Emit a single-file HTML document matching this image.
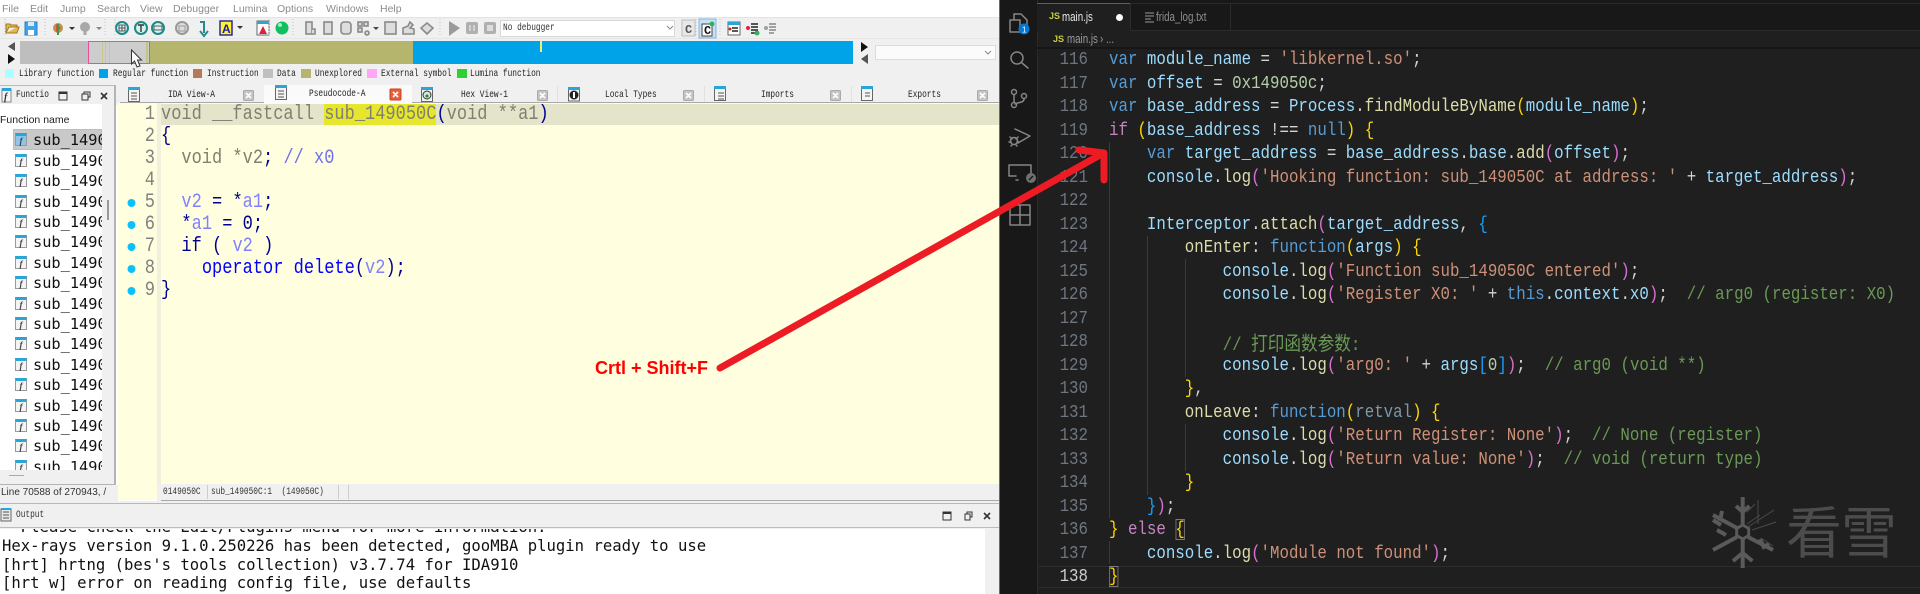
<!DOCTYPE html>
<html><head><meta charset="utf-8"><style>
html,body{margin:0;padding:0;width:1920px;height:594px;overflow:hidden;background:#fff}
body{position:relative}
div{position:absolute;box-sizing:border-box;white-space:pre}
i{font-style:normal}
.m{font:10.5px "Liberation Sans",sans-serif;color:#8c8c8c;top:3px;line-height:13px}
.s{font:10.5px/12px "Liberation Mono",monospace;color:#222;transform:scaleX(.746);transform-origin:0 0}
.fi{left:15px;width:12px;height:13px;border:1px solid #999;border-top:3px solid #2aa6d6;background:#f4f4f4;font:italic bold 9px/10px "Liberation Serif",serif;color:#444;text-align:center}
.fn{left:33px;font:15.3px/20px "DejaVu Sans Mono",monospace;color:#111}
#ida{left:161px;top:104px;width:1000px;height:198px;overflow:visible;white-space:normal;font:20px/22px "Liberation Mono",monospace;transform:scaleX(.85);transform-origin:0 0;color:#808070}
#ida div{position:static;height:22px;white-space:pre}
.gn{left:130px;width:25px;text-align:right;font:20px/22px "Liberation Mono",monospace;color:#808080;transform:scaleX(.85);transform-origin:100% 0}
.o{color:#000090}.h{color:#0000ff}.vv{color:#8080ff}.cm{color:#7070ee}
.out{left:2px;font:15.6px/19px "DejaVu Sans Mono",monospace;color:#111}
#code{left:1109.4px;top:48.25px;width:1100px;height:541px;white-space:normal;font:18.5px "Liberation Mono",monospace;line-height:23.51px;color:#d4d4d4;transform:scaleX(.853);transform-origin:0 0}
#code div{position:static;height:23.51px;white-space:pre}
.k{color:#569cd6}.v{color:#9cdcfe}.t{color:#ce9178}.n{color:#b5cea8}.f{color:#dcdcaa}.c{color:#6a9955}.p{color:#c586c0}.y{color:#ffd700}.u{color:#da70d6}.b{color:#179fff}.r{color:#7d97a8}
.bx{outline:1px solid #7a7a7a;outline-offset:-1px}
.ln{left:1040px;width:48px;text-align:right;font:18.5px "Liberation Mono",monospace;line-height:23.51px;color:#6e7681;transform:scaleX(.853);transform-origin:100% 0}
.g{width:1px;background:#3a3a3a}
.tb{font:12.5px/16px "Liberation Sans",sans-serif;transform:scaleX(.78);transform-origin:0 0}
</style></head><body>

<!-- IDA background -->
<div style="left:0;top:17px;width:1000px;height:88px;background:#f0f0f0"></div>
<div style="left:0;top:17px;width:1000px;height:1px;background:#e3e3e3"></div>
<div style="left:0;top:38px;width:1000px;height:1px;background:#e6e6e6"></div>

<div class="m" style="left:2px">File</div><div class="m" style="left:30px">Edit</div><div class="m" style="left:60px">Jump</div><div class="m" style="left:97px">Search</div><div class="m" style="left:140px">View</div><div class="m" style="left:173px">Debugger</div><div class="m" style="left:233px">Lumina</div><div class="m" style="left:277px">Options</div><div class="m" style="left:326px">Windows</div><div class="m" style="left:380px">Help</div>

<!-- debugger combo -->
<div style="left:500px;top:20px;width:175px;height:17px;background:#fff;border:1px solid #d8d8d8"></div>
<div class="s" style="left:503px;top:22px;color:#333">No debugger</div>

<!-- nav band -->
<div style="left:20px;top:41px;width:68px;height:23px;background:#bebebe"></div>
<div style="left:88px;top:41px;width:62px;height:23px;background:#cdcdcd;border:1px solid #e8509c"></div>
<div style="left:102px;top:42px;width:1px;height:21px;background:#c8c88a"></div>
<div style="left:105px;top:42px;width:1px;height:21px;background:#c8c88a"></div>
<div style="left:109px;top:42px;width:1px;height:21px;background:#c8c88a"></div>
<div style="left:146px;top:42px;width:2px;height:21px;background:#c4c484"></div>
<div style="left:150px;top:41px;width:263px;height:23px;background:#b5b56e"></div>
<div style="left:413px;top:41px;width:440px;height:23px;background:#00a2e8"></div>
<div style="left:540px;top:41px;width:2px;height:11px;background:#f2ee70"></div>
<div style="left:875px;top:45px;width:121px;height:15px;background:#fbfbfb;border:1px solid #dcdcdc"></div>

<!-- legend -->
<div style="left:5px;top:69px;width:9px;height:9px;background:#aaffff"></div><div class="s" style="left:19px;top:68px">Library function</div>
<div style="left:99px;top:69px;width:9px;height:9px;background:#00a2e8"></div><div class="s" style="left:113px;top:68px">Regular function</div>
<div style="left:193px;top:69px;width:9px;height:9px;background:#b5795a"></div><div class="s" style="left:207px;top:68px">Instruction</div>
<div style="left:263px;top:69px;width:10px;height:9px;background:#c0c0c0"></div><div class="s" style="left:277px;top:68px">Data</div>
<div style="left:301px;top:69px;width:10px;height:9px;background:#b5b56e"></div><div class="s" style="left:315px;top:68px">Unexplored</div>
<div style="left:367px;top:69px;width:10px;height:9px;background:#ffa6f8"></div><div class="s" style="left:381px;top:68px">External symbol</div>
<div style="left:457px;top:69px;width:10px;height:9px;background:#2fd02f"></div><div class="s" style="left:470px;top:68px">Lumina function</div>

<!-- tabs -->
<div style="left:264px;top:85px;width:148px;height:18px;background:#fafafa"></div>
<div style="left:120px;top:102px;width:144px;height:1px;background:#a8a8a8"></div>
<div style="left:412px;top:102px;width:587px;height:1px;background:#a8a8a8"></div>
<div style="left:557px;top:86px;width:1px;height:16px;background:#e0e0e0"></div><div style="left:704px;top:86px;width:1px;height:16px;background:#e0e0e0"></div><div style="left:851px;top:86px;width:1px;height:16px;background:#e0e0e0"></div>
<div class="s" style="left:168px;top:89px">IDA View-A</div>
<div class="s" style="left:309px;top:88px">Pseudocode-A</div>
<div class="s" style="left:461px;top:89px">Hex View-1</div>
<div class="s" style="left:605px;top:89px">Local Types</div>
<div class="s" style="left:761px;top:89px">Imports</div>
<div class="s" style="left:908px;top:89px">Exports</div>

<!-- left panel -->
<div style="left:0;top:85px;width:116px;height:19px;background:#f0f0f0;border-top:1px solid #bbb"></div>
<div class="s" style="left:16px;top:89px;width:64px;overflow:hidden">Functio</div>
<div style="left:0;top:104px;width:102px;height:366px;background:#fff"></div>
<div style="left:102px;top:104px;width:12px;height:380px;background:#f0f0f0"></div>
<div style="left:0;top:470px;width:114px;height:14px;background:#f0f0f0"></div>
<div style="left:9px;top:475px;width:15px;height:1px;background:#aaa"></div>
<div style="left:107px;top:200px;width:2px;height:20px;background:#999"></div>
<div style="left:114px;top:85px;width:2px;height:399px;background:#b4b4b4"></div>
<div style="left:0;top:484px;width:116px;height:1px;background:#b4b4b4"></div>
<div style="left:0;top:485px;width:118px;height:18px;background:#f0f0f0"></div>
<div style="left:0;top:113px;font:10.5px/14px 'Liberation Sans',sans-serif;color:#222">Function name</div>
<div style="left:1px;top:486px;width:106px;overflow:hidden;font:10px/14px 'Liberation Sans',sans-serif;color:#333">Line 70588 of 270943, /</div>

<div style="left:0;top:127px;width:102px;height:343px;overflow:hidden">
<div style="left:13px;top:2px;width:89px;height:21px;background:#c9c9c9;border:1px solid #bdbdbd"></div>
<div class="fi" style="top:6px;background:#8cc6ec">f</div><div class="fn" style="top:3px">sub_14905</div>
<div class="fi" style="top:27px">f</div><div class="fn" style="top:24px">sub_14905</div>
<div class="fi" style="top:47px">f</div><div class="fn" style="top:44px">sub_14905</div>
<div class="fi" style="top:68px">f</div><div class="fn" style="top:65px">sub_14905</div>
<div class="fi" style="top:88px">f</div><div class="fn" style="top:85px">sub_14905</div>
<div class="fi" style="top:108px">f</div><div class="fn" style="top:105px">sub_14905</div>
<div class="fi" style="top:129px">f</div><div class="fn" style="top:126px">sub_14905</div>
<div class="fi" style="top:149px">f</div><div class="fn" style="top:146px">sub_14905</div>
<div class="fi" style="top:170px">f</div><div class="fn" style="top:167px">sub_14905</div>
<div class="fi" style="top:190px">f</div><div class="fn" style="top:187px">sub_14905</div>
<div class="fi" style="top:210px">f</div><div class="fn" style="top:207px">sub_14905</div>
<div class="fi" style="top:231px">f</div><div class="fn" style="top:228px">sub_14905</div>
<div class="fi" style="top:251px">f</div><div class="fn" style="top:248px">sub_14905</div>
<div class="fi" style="top:272px">f</div><div class="fn" style="top:269px">sub_14905</div>
<div class="fi" style="top:292px">f</div><div class="fn" style="top:289px">sub_14905</div>
<div class="fi" style="top:312px">f</div><div class="fn" style="top:309px">sub_14905</div>
<div class="fi" style="top:333px">f</div><div class="fn" style="top:330px">sub_14905</div>
</div>

<!-- editor -->
<div style="left:118px;top:103px;width:881px;height:381px;background:#ffffe0"></div>
<div style="left:118px;top:484px;width:39px;height:16px;background:#ffffe0"></div>
<div style="left:157px;top:103px;width:4px;height:381px;background:#f0f0dc"></div>
<div style="left:161px;top:104px;width:838px;height:21px;background:#e4e4cb"></div>
<div style="left:324px;top:104px;width:112px;height:21px;background:#e6e62e"></div>
<div style="left:157px;top:484px;width:842px;height:17px;background:#f0f0f0"></div>
<div style="left:161px;top:500px;width:838px;height:1px;background:#a8a8a8"></div>
<div class="s" style="left:163px;top:486px;color:#333">0149050C</div>
<div style="left:207px;top:485px;width:1px;height:14px;background:#ccc"></div>
<div class="s" style="left:211px;top:486px;color:#333">sub_149050C:1  (149050C)</div>
<div style="left:338px;top:485px;width:1px;height:14px;background:#ccc"></div>
<div style="left:348px;top:485px;width:1px;height:14px;background:#ccc"></div>

<div class="gn" style="top:104px">1</div><div class="gn" style="top:126px">2</div><div class="gn" style="top:148px">3</div><div class="gn" style="top:170px">4</div><div class="gn" style="top:192px">5</div><div class="gn" style="top:214px">6</div><div class="gn" style="top:236px">7</div><div class="gn" style="top:258px">8</div><div class="gn" style="top:280px">9</div>

<div id="ida"><div>void __fastcall sub_149050C<i class="o">(</i>void **a1<i class="o">)</i></div><div><i class="o">{</i></div><div>  void *v2<i class="o">;</i> <i class="cm">// x0</i></div><div> </div><div>  <i class="vv">v2</i> <i class="o">=</i> <i class="o">*</i><i class="vv">a1</i><i class="o">;</i></div><div>  <i class="o">*</i><i class="vv">a1</i> <i class="o">=</i> <i class="o">0;</i></div><div>  <i class="o">if</i> <i class="o">(</i> <i class="vv">v2</i> <i class="o">)</i></div><div>    <i class="h">operator delete</i><i class="o">(</i><i class="vv">v2</i><i class="o">);</i></div><div><i class="o">}</i></div></div>

<!-- output -->
<div style="left:0;top:501px;width:999px;height:28px;background:#f0f0f0"></div>
<div style="left:0;top:503px;width:999px;height:1px;background:#b8b8b8"></div>
<div style="left:0;top:527px;width:999px;height:1px;background:#bcbcbc"></div>
<div class="s" style="left:16px;top:509px;color:#333">Output</div>
<div style="left:0;top:529px;width:985px;height:65px;background:#fff;overflow:hidden">
<div class="out" style="top:-11px">  Please check the Edit/Plugins menu for more information.</div>
<div class="out" style="top:7.5px">Hex-rays version 9.1.0.250226 has been detected, gooMBA plugin ready to use</div>
<div class="out" style="top:26.5px">[hrt] hrtng (bes's tools collection) v3.7.74 for IDA910</div>
<div class="out" style="top:45px">[hrt w] error on reading config file, use defaults</div>
</div>
<div style="left:985px;top:529px;width:14px;height:65px;background:#f0f0f0"></div>

<!-- VS Code -->
<div style="left:999px;top:0;width:921px;height:594px;background:#1f1f1f"></div>
<div style="left:999px;top:0;width:1px;height:594px;background:#6a6a6a"></div>
<div style="left:1000px;top:0;width:37px;height:594px;background:#181818"></div>
<div style="left:1037px;top:0;width:883px;height:30px;background:#181818"></div>
<div style="left:1037px;top:3px;width:883px;height:1px;background:#2b2b2b"></div>
<div style="left:1037px;top:30px;width:883px;height:1px;background:#2b2b2b"></div>
<div style="left:1037px;top:0;width:1px;height:594px;background:#2b2b2b"></div>
<div style="left:1037px;top:4px;width:93px;height:27px;background:#1f1f1f"></div>
<div style="left:1037px;top:3px;width:93px;height:1px;background:#0078d4"></div>
<div style="left:1130px;top:4px;width:1px;height:26px;background:#2b2b2b"></div>
<div style="left:1230px;top:4px;width:1px;height:26px;background:#2b2b2b"></div>
<div style="left:1037px;top:47px;width:883px;height:2px;background:#151515"></div>
<div style="left:1049px;top:10px;font:bold 9px/13px 'Liberation Sans',sans-serif;color:#cbcb41">JS</div>
<div class="tb" style="left:1062px;top:9px;color:#e8e8e8">main.js</div>
<div style="left:1116px;top:14px;width:7px;height:7px;border-radius:50%;background:#fff"></div>
<div class="tb" style="left:1156px;top:9px;color:#8f8f8f">frida_log.txt</div>
<div style="left:1053px;top:33px;font:bold 9px/13px 'Liberation Sans',sans-serif;color:#cbcb41">JS</div>
<div class="tb" style="left:1067px;top:31px;color:#9a9a9a">main.js</div>
<div class="tb" style="left:1100px;top:31px;color:#9a9a9a">› ...</div>

<!-- indent guides -->
<div class="g" style="left:1109px;top:142px;height:376px"></div>
<div class="g" style="left:1109px;top:541px;height:23px"></div>
<div class="g" style="left:1147px;top:236px;height:259px"></div>
<div class="g" style="left:1185px;top:259px;height:118px"></div>
<div class="g" style="left:1185px;top:424px;height:47px"></div>
<div style="left:1038px;top:566px;width:882px;height:22px;border-top:1px solid #2c2c2c;border-bottom:1px solid #2c2c2c"></div>

<!-- line numbers -->
<div class="ln" style="top:48.25px">116</div><div class="ln" style="top:71.76px">117</div><div class="ln" style="top:95.27px">118</div><div class="ln" style="top:118.78px">119</div><div class="ln" style="top:142.29px">120</div><div class="ln" style="top:165.8px">121</div><div class="ln" style="top:189.31px">122</div><div class="ln" style="top:212.82px">123</div><div class="ln" style="top:236.33px">124</div><div class="ln" style="top:259.84px">125</div><div class="ln" style="top:283.35px">126</div><div class="ln" style="top:306.86px">127</div><div class="ln" style="top:330.37px">128</div><div class="ln" style="top:353.88px">129</div><div class="ln" style="top:377.39px">130</div><div class="ln" style="top:400.9px">131</div><div class="ln" style="top:424.41px">132</div><div class="ln" style="top:447.92px">133</div><div class="ln" style="top:471.43px">134</div><div class="ln" style="top:494.94px">135</div><div class="ln" style="top:518.45px">136</div><div class="ln" style="top:541.96px">137</div><div class="ln" style="top:565.47px;color:#cccccc">138</div>

<div id="code"><div><i class="k">var</i> <i class="v">module_name</i> = <i class="t">'libkernel.so'</i>;</div><div><i class="k">var</i> <i class="v">offset</i> = <i class="n">0x149050c</i>;</div><div><i class="k">var</i> <i class="v">base_address</i> = <i class="v">Process</i>.<i class="f">findModuleByName</i><i class="y">(</i><i class="v">module_name</i><i class="y">)</i>;</div><div><i class="p">if</i> <i class="y">(</i><i class="v">base_address</i> !== <i class="k">null</i><i class="y">)</i> <i class="y">{</i></div><div>    <i class="k">var</i> <i class="v">target_address</i> = <i class="v">base_address</i>.<i class="v">base</i>.<i class="f">add</i><i class="u">(</i><i class="v">offset</i><i class="u">)</i>;</div><div>    <i class="v">console</i>.<i class="f">log</i><i class="u">(</i><i class="t">'Hooking function: sub_149050C at address: '</i> + <i class="v">target_address</i><i class="u">)</i>;</div><div> </div><div>    <i class="v">Interceptor</i>.<i class="f">attach</i><i class="u">(</i><i class="v">target_address</i>, <i class="b">{</i></div><div>        <i class="f">onEnter</i>: <i class="k">function</i><i class="y">(</i><i class="v">args</i><i class="y">)</i> <i class="y">{</i></div><div>            <i class="v">console</i>.<i class="f">log</i><i class="u">(</i><i class="t">'Function sub_149050C entered'</i><i class="u">)</i>;</div><div>            <i class="v">console</i>.<i class="f">log</i><i class="u">(</i><i class="t">'Register X0: '</i> + <i class="k">this</i>.<i class="v">context</i>.<i class="v">x0</i><i class="u">)</i>;  <i class="c">// arg0 (register: X0)</i></div><div> </div><div>            <i class="c">// <span style="font:19.5px/23px 'Noto Sans CJK SC',sans-serif">打印函数参数</span>:</i></div><div>            <i class="v">console</i>.<i class="f">log</i><i class="u">(</i><i class="t">'arg0: '</i> + <i class="v">args</i><i class="b">[</i><i class="n">0</i><i class="b">]</i><i class="u">)</i>;  <i class="c">// arg0 (void **)</i></div><div>        <i class="y">}</i>,</div><div>        <i class="f">onLeave</i>: <i class="k">function</i><i class="y">(</i><i class="r">retval</i><i class="y">)</i> <i class="y">{</i></div><div>            <i class="v">console</i>.<i class="f">log</i><i class="u">(</i><i class="t">'Return Register: None'</i><i class="u">)</i>;  <i class="c">// None (register)</i></div><div>            <i class="v">console</i>.<i class="f">log</i><i class="u">(</i><i class="t">'Return value: None'</i><i class="u">)</i>;  <i class="c">// void (return type)</i></div><div>        <i class="y">}</i></div><div>    <i class="b">}</i><i class="u">)</i>;</div><div><i class="y">}</i> <i class="p">else</i> <i class="y bx">{</i></div><div>    <i class="v">console</i>.<i class="f">log</i><i class="u">(</i><i class="t">'Module not found'</i><i class="u">)</i>;</div><div><i class="y bx">}</i></div></div>

<!-- watermark -->
<div style="left:1786px;top:494px;font:56px/72px 'Noto Sans CJK SC',sans-serif;color:#4c4c4c;letter-spacing:-1px">看雪</div>

<div style="left:595px;top:357px;font:bold 18px/22px 'Liberation Sans',sans-serif;color:#ff0000">Crtl + Shift+F</div>

<!-- icons / arrow overlay -->
<svg style="position:absolute;left:0;top:0" width="1920" height="594" viewBox="0 0 1920 594" fill="none">
<!-- toolbar -->
<path d="M6 33V24h4l1 1h6v2H9l-3 6h11l2-6h-2" fill="#e8b850" stroke="#a07820"/>
<rect x="25" y="22" width="12" height="13" fill="#3fa4e8" stroke="#2a80c0"/><rect x="28" y="22" width="6" height="4" fill="#d8ecf8"/><rect x="28" y="30" width="6" height="5" fill="#fff"/>
<circle cx="58" cy="28" r="5" fill="#c09050"/><path d="M56 24l5 4-5 4z" fill="#e05030"/><path d="M58 24v11" stroke="#3a9a4a" stroke-width="2"/>
<path d="M69 27h6l-3 3z" fill="#333"/>
<circle cx="85" cy="27" r="5" fill="#a8a8a8"/><path d="M85 31v4" stroke="#a8a8a8" stroke-width="3"/>
<path d="M96 27h6l-3 3z" fill="#888"/>
<g stroke="#1d8a8a" stroke-width="2" fill="#d8f0ee"><circle cx="122" cy="28" r="6"/><circle cx="141" cy="28" r="6"/><circle cx="158" cy="28" r="6"/></g>
<path d="M119 25h6v6h-6zM119 28h6M122 25v6" stroke="#333" stroke-width=".8"/><path d="M138 25h6M141 25v7" stroke="#333" stroke-width="1.4"/><path d="M154 26h8v4h-8z" stroke="#333" stroke-width=".8"/>
<circle cx="182" cy="28" r="6" fill="#ddd" stroke="#999" stroke-width="2"/><path d="M179 26h6v5h-6z" stroke="#999"/>
<path d="M200 22h4v11" stroke="#2a8a8a" stroke-width="2"/><path d="M200 31l4 5 4-5" stroke="#2a8a8a" stroke-width="2"/>
<rect x="220" y="21" width="12" height="14" fill="#fff22a" stroke="#1a1aa0" stroke-width="1.4"/><text x="222" y="33" font-family="Liberation Sans" font-weight="bold" font-size="12" fill="#1a1ab0">A</text>
<path d="M237 26h6l-3 3z" fill="#333"/>
<rect x="257" y="21" width="12" height="14" fill="#fff" stroke="#666"/><rect x="257" y="21" width="12" height="3" fill="#2aa6d6"/><path d="M259 34l4-8 4 8z" fill="#e0203a"/>
<circle cx="282" cy="28" r="6.5" fill="#10c060"/><circle cx="280" cy="25" r="2" fill="#9ef0c0"/>
<g stroke="#8a8a8a" stroke-width="1.6" fill="#ddd"><rect x="306" y="22" width="6" height="12"/><path d="M312 29h3v5h-3"/><rect x="324" y="22" width="8" height="12"/><rect x="341" y="22" width="10" height="12" rx="3"/><rect x="358" y="22" width="4" height="4"/><rect x="364" y="22" width="4" height="4"/><rect x="358" y="28" width="4" height="4"/><circle cx="367" cy="33" r="2"/><rect x="385" y="22" width="11" height="12"/><path d="M403 34v-6l5-2 2-4 3 3-3 3 4 1v5z"/><path d="M427 23l6 5-6 6-6-6z"/></g>
<path d="M373 27h6l-3 3z" fill="#444"/>
<path d="M449 21l11 7-11 8z" fill="#9a9a9a"/>
<rect x="466" y="22" width="12" height="12" rx="2" fill="#b0b0b0"/><path d="M470 25v6M474 25v6" stroke="#ddd" stroke-width="1.5"/>
<rect x="484" y="22" width="12" height="12" rx="2" fill="#b0b0b0"/><rect x="487" y="25" width="6" height="6" fill="#ddd"/>
<path d="M667 26l3 3 3-3" stroke="#888"/>
<rect x="682" y="20" width="13" height="16" fill="#e8e8e8" stroke="#bbb"/><text x="685" y="33" font-family="Liberation Mono" font-weight="bold" font-size="12" fill="#555">C</text>
<rect x="699" y="19" width="17" height="19" fill="#c8e0f4" stroke="#80b8e0"/><rect x="702" y="24" width="10" height="12" fill="#fff" stroke="#444"/><text x="704" y="34" font-family="Liberation Mono" font-weight="bold" font-size="12" fill="#111">C</text><circle cx="712" cy="24" r="2.5" fill="#30b060"/>
<rect x="728" y="22" width="12" height="13" fill="#fff" stroke="#666"/><rect x="728" y="22" width="12" height="3" fill="#2aa6d6"/><path d="M732 28h6M732 31h6" stroke="#222" stroke-width="1.4"/><circle cx="730" cy="29" r="1.5" fill="#e02020"/>
<circle cx="748" cy="28" r="2" fill="#e02040"/><path d="M751 24h7M751 27h7M751 30h7M751 33h5" stroke="#222" stroke-width="1.4"/><circle cx="757" cy="33" r="2.5" fill="#30b060"/>
<circle cx="766" cy="28" r="2" fill="#a0a0a0"/><path d="M769 24h7M769 27h7M769 30h7M769 33h5" stroke="#888" stroke-width="1.4"/>
<path d="M115 19v17M269 19v17M293 19v17M440 19v17M696 19v17M720 19v17" stroke="#c4c4c4" stroke-dasharray="1 2"/>
<path d="M5 19v17M45 19v17M105 19v17" stroke="#c4c4c4" stroke-dasharray="1 2"/>
<!-- nav arrows -->
<path d="M15 42v9l-7-4.5z" fill="#555"/><path d="M8 54v10l7-5z" fill="#111"/>
<path d="M861 42v10l7-5z" fill="#111"/><path d="M868 54v10l-7-5z" fill="#555"/>
<path d="M985 51l3 3 3-3" stroke="#888"/>
<!-- cursor -->
<path d="M131.500 50v14l3-3 2.500 6 3-1-2.500-6h4z" fill="#fff" stroke="#333"/>
<!-- panel icons -->
<rect x="2" y="89" width="9" height="13" fill="#f6f6f6" stroke="#888"/><rect x="2" y="88" width="9" height="3" fill="#2aa6d6"/><text x="4" y="100" font-family="Liberation Serif" font-style="italic" font-weight="bold" font-size="10" fill="#333">f</text>
<rect x="59" y="92" width="8" height="8" stroke="#333"/><path d="M59 93h8" stroke="#333" stroke-width="2"/>
<rect x="82" y="94" width="6" height="6" stroke="#333"/><path d="M84 94v-2h6v5h-2" stroke="#333"/>
<path d="M101 93l6 6M107 93l-6 6" stroke="#333" stroke-width="1.6"/>
<!-- tab icons -->
<g stroke="#666" fill="#f4f4f4"><rect x="128.500" y="88.500" width="11" height="13"/><rect x="275.500" y="86.500" width="11" height="13"/><rect x="568.500" y="88" width="11" height="13"/><rect x="714.500" y="87.500" width="11" height="13"/><rect x="861.500" y="87.500" width="11" height="13"/><rect x="421.500" y="88.500" width="11" height="13"/></g>
<g fill="#2aa6d6"><rect x="128" y="87" width="12" height="3"/><rect x="275" y="85" width="12" height="3"/><rect x="421" y="87" width="12" height="3"/><rect x="568" y="87" width="12" height="3"/><rect x="714" y="86" width="12" height="3"/><rect x="861" y="86" width="12" height="3"/></g>
<path d="M131 93h6M131 96h6M131 99h6M278 91h6M278 94h6M278 97h6M718 93h6M718 96h6M718 99h6M865 93h5M865 96h5" stroke="#555"/>
<circle cx="427" cy="95" r="4" stroke="#333" fill="#d0e8d0"/><circle cx="427" cy="96" r="1.5" fill="#208040"/><circle cx="574" cy="95" r="4.500" fill="#222"/><rect x="573" y="92" width="2" height="6" fill="#fff"/>
<g fill="#c4c4c4" stroke="#aaa"><rect x="243.500" y="90.500" width="10" height="10" rx="1"/><rect x="537.500" y="90.500" width="10" height="10" rx="1"/><rect x="683.500" y="90.500" width="10" height="10" rx="1"/><rect x="830.500" y="90.500" width="10" height="10" rx="1"/><rect x="977.500" y="90.500" width="10" height="10" rx="1"/></g>
<rect x="390" y="89" width="11" height="11" rx="1" fill="#e8603a" stroke="#c84020"/>
<path d="M246 93l5 5M251 93l-5 5M540 93l5 5M545 93l-5 5M686 93l5 5M691 93l-5 5M833 93l5 5M838 93l-5 5M980 93l5 5M985 93l-5 5M393 92l5 5M398 92l-5 5" stroke="#fff" stroke-width="1.600"/>
<!-- gutter dots -->
<g fill="#0cc0fb"><circle cx="131.500" cy="203" r="4"/><circle cx="131.500" cy="225" r="4"/><circle cx="131.500" cy="247" r="4"/><circle cx="131.500" cy="269" r="4"/><circle cx="131.500" cy="291" r="4"/></g>
<!-- output bar icons -->
<rect x="1" y="509" width="10" height="12" fill="#e8e8e8" stroke="#666"/><rect x="1" y="508" width="10" height="2" fill="#2aa6d6"/><path d="M3 512h6M3 515h6M3 518h6" stroke="#555"/>
<rect x="943" y="512" width="8" height="8" stroke="#333"/><path d="M943 513h8" stroke="#333" stroke-width="2"/>
<rect x="965" y="514" width="5" height="6" stroke="#333"/><path d="M967 514v-2h5v5h-2" stroke="#333"/>
<path d="M984 513l6 6M990 513l-6 6" stroke="#333" stroke-width="1.600"/>
<!-- frida tab icon -->
<path d="M1145 13h9M1145 16h9M1145 19h6M1145 22h9" stroke="#9a9a9a"/>
<!-- activity bar -->
<g stroke="#868686" stroke-width="1.500" stroke-linecap="round" stroke-linejoin="round">
<path d="M1014 14h7l6 6v10h-7M1014 14v6M1010 20h10v12h-10z"/>
<circle cx="1017" cy="58" r="6"/><path d="M1022 63l6 5"/>
<circle cx="1014" cy="92" r="2.500"/><circle cx="1014" cy="105" r="2.500"/><circle cx="1024" cy="96" r="2.500"/><path d="M1014 95v7M1024 99c0 4-6 3-9 5"/>
<path d="M1015 129l15 7-12 7"/><circle cx="1014" cy="141" r="3.500"/><path d="M1010 137l2 2M1018 137l-2 2M1009 142h2M1017 142h2M1011 146l1-1M1017 146l-1-1"/>
<path d="M1031 178v-13h-22v11h7M1016 180h2"/>
<path d="M1010 205h10v10h-10zM1020 215h10v-10h-10M1010 215v10h10v-10M1020 225h10v-10"/>
</g>
<circle cx="1031" cy="178" r="5" fill="#707070"/><path d="M1029 180l4-4" stroke="#181818" stroke-width="1.500"/>
<circle cx="1024" cy="29" r="5.500" fill="#0078d4"/><text x="1022" y="32.500" font-family="Liberation Sans" font-size="8" fill="#fff">1</text>
<!-- snowflake watermark -->
<g stroke="#5a5a5a" stroke-width="4" stroke-linecap="butt">
<path d="M1742.700 497v27M1742.700 539v29M1736 506l6.700 6 6.700-6M1733 561l9.700-8 9.700 8"/>
<path d="M1713 515l24 13M1748 537l25 13M1713 550l24-13M1722 511l-2 10M1717 530l9 5M1763 545l-3-6"/>
<path d="M1713 520l8 5M1769 544l-7 4"/>
</g>
<path d="M1748 527l26-17M1752 530l24-8M1758 500v24M1747 524l13-9M1755 504l-8 8M1773 546l-12-8" stroke="#4a4a4a" stroke-width="1"/>
<path d="M1742.700 525l6 3.500v7l-6 3.500-6-3.500v-7z" stroke="#5a5a5a" stroke-width="3"/>
<!-- red arrow -->
<g stroke="#ed1c24" stroke-width="7" stroke-linecap="round" stroke-linejoin="round">
<path d="M720 368L1100 155"/>
<path d="M1079 150L1104 153L1104 180"/>
</g>
</svg>
</body></html>
